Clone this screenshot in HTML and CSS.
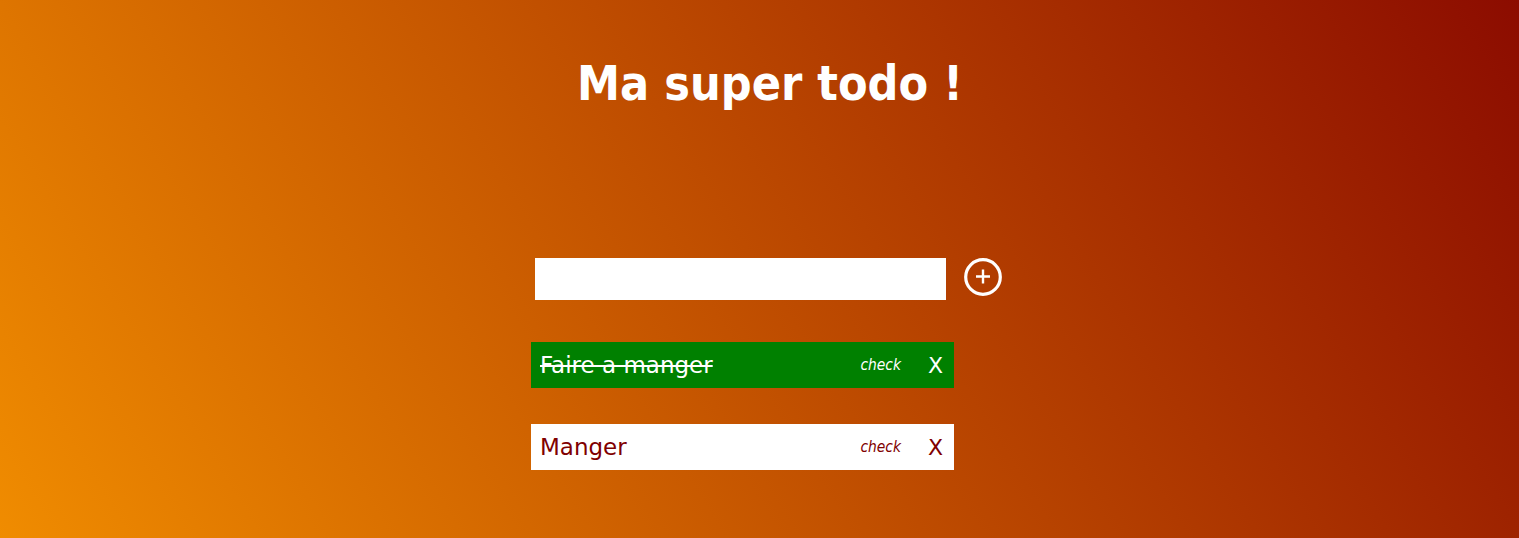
FILE: index.html
```html
<!DOCTYPE html>
<html lang="fr">
<head>
<meta charset="utf-8">
<title>Ma super todo !</title>
<link rel="stylesheet" href="styles.css">
</head>
<body>
<div class="page">
  <h1 class="title">Ma super todo !</h1>
  <main class="todo">
    <form class="add-form">
      <input class="add-input" type="text" aria-label="Nouvelle tâche">
      <button class="add-btn" type="button" aria-label="Ajouter">
        <svg width="38" height="38" viewBox="0 0 38 38">
          <circle cx="19" cy="19" r="17.3" fill="none" stroke="#fff" stroke-width="3.2"/>
          <path d="M19 11.5v14M12 18.5h14" stroke="#fff" stroke-width="2.4" fill="none"/>
        </svg>
      </button>
    </form>
    <ul class="list">
      <li class="item done">
        <span class="label">Faire a manger</span>
        <span class="check">check</span>
        <span class="remove">X</span>
      </li>
      <li class="item">
        <span class="label">Manger</span>
        <span class="check">check</span>
        <span class="remove">X</span>
      </li>
    </ul>
  </main>
</div>
</body>
</html>
```
FILE: styles.css
```css
html, body {
  margin: 0;
  padding: 0;
  height: 100%;
}
body {
  background: linear-gradient(58deg, #f08c00 0%, #8c0c00 100%);
  font-family: "DejaVu Sans", sans-serif;
  overflow: hidden;
}
.page {
  display: flex;
  flex-direction: column;
  height: 100%;
}
.title {
  margin: 52px 0 0 21px;
  text-align: center;
  color: #fff;
  font-family: "DejaVu Sans Condensed", "DejaVu Sans", sans-serif;
  font-size: 48px;
  font-weight: bold;
  line-height: 62px;
}
.todo {
  width: 423px;
  margin: 144px 0 0 calc(50% - 228.5px);
}
.add-form {
  display: flex;
  align-items: flex-start;
  padding-left: 4px;
}
.add-input {
  flex: 0 0 411px;
  width: 411px;
  height: 42px;
  box-sizing: border-box;
  border: none;
  outline: none;
  background: #fff;
  margin: 0;
  padding: 0 8px;
  font: 20px "DejaVu Sans", sans-serif;
}
.add-btn {
  flex: 0 0 38px;
  margin: 0 0 0 18px;
  padding: 0;
  border: none;
  background: none;
  width: 38px;
  height: 38px;
  display: block;
  cursor: pointer;
}
.add-btn svg { display: block; }
.list {
  list-style: none;
  margin: 42px 0 0;
  padding: 0;
  display: flex;
  flex-direction: column;
  gap: 36px;
}
.item {
  display: flex;
  align-items: center;
  height: 46px;
  background: #fff;
  color: #800000;
  padding: 0 10px 0 9px;
}
.item.done {
  background: #008000;
  color: #fff;
}
.label {
  flex: 1;
  font-size: 23px;
}
.done .label {
  text-decoration: line-through;
  text-decoration-thickness: 2px;
}
.check {
  font-family: "DejaVu Sans Condensed", "DejaVu Sans", sans-serif;
  font-style: italic;
  font-size: 15.4px;
  margin-right: 27px;
}
.remove {
  font-size: 22px;
  width: 16px;
}
```
